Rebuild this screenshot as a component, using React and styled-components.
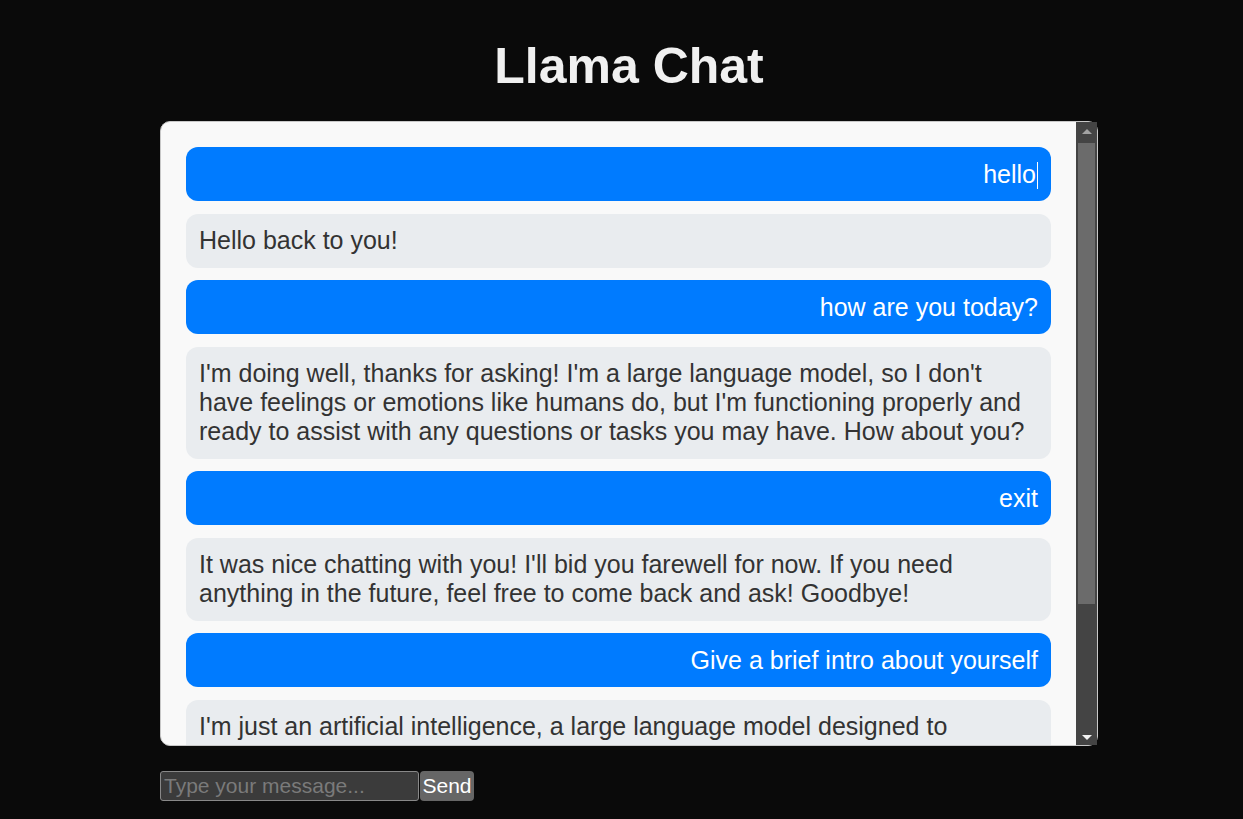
import React from 'react';
import styled, { createGlobalStyle, css } from 'styled-components';

const GlobalStyle = createGlobalStyle`
  html, body {
    margin: 0;
    padding: 0;
    background-color: #0a0a0a;
    font-family: "Liberation Sans", Arial, sans-serif;
  }
`

const Page = styled.div`
  min-height: 819px;
  padding: 37px 0 0 15px;
  box-sizing: border-box;
  display: flex;
  flex-direction: column;
  align-items: center;
`

const Title = styled.h1`
  margin: 0 0 26px;
  font-size: 50px;
  font-weight: 700;
  color: #f0f0f0;
`

const Column = styled.div`
  width: 938px;
  display: flex;
  flex-direction: column;
`

const ChatBox = styled.div`
  height: 625px;
  box-sizing: border-box;
  background-color: #f9f9f9;
  border: 1px solid #c8c8c8;
  border-radius: 10px;
  display: flex;
`

const Messages = styled.div`
  flex: 1;
  min-width: 0;
  overflow: hidden;
  border-radius: 9px 0 0 9px;
  padding: 25px;
  display: flex;
  flex-direction: column;
  gap: 12.5px;
`

const ScrollTrack = styled.div`
  width: 21px;
  flex-shrink: 0;
  background-color: #444444;
  display: flex;
  flex-direction: column;
`

const ScrollButton = styled.div`
  height: 20px;
  flex-shrink: 0;
  display: flex;
  align-items: center;
  justify-content: center;
  &:after {
    content: "";
    width: 0;
    height: 0;
    border-left: 5px solid transparent;
    border-right: 5px solid transparent;
    ${({down}) => down ? css`
      border-top: 5px solid #f2f2f2;
      margin-top: 4px;
    ` : css`
      border-bottom: 5px solid #a3a3a3;
      margin-top: -2px;
    `}
  }
`

const ScrollSpacer = styled.div`
  flex: 1;
`

const ScrollThumb = styled.div`
  height: 461px;
  margin: 1px 2px 0 2px;
  background-color: #6b6b6b;
`

const Bubble = styled.div`
  flex-shrink: 0;
  padding: 12.5px 13px;
  border-radius: 12px;
  font-size: 25px;
  line-height: 29px;
  background-color: #e9ecef;
  color: #333333;
  text-align: left;
  ${({user}) => user && css`
    background-color: #007bff;
    color: #ffffff;
    text-align: right;
  `}
`

const Caret = styled.span`
  display: inline-block;
  width: 1px;
  height: 27px;
  margin-left: 1px;
  background-color: #ffffff;
  vertical-align: -6px;
`

const InputRow = styled.div`
  margin-top: 25px;
  display: flex;
  gap: 1px;
`

const MessageInput = styled.input`
  width: 259px;
  height: 30px;
  box-sizing: border-box;
  padding: 0 3px;
  background-color: #3b3b3b;
  border: 1px solid #888888;
  border-radius: 3px;
  color: #eeeeee;
  font-family: "Liberation Sans", Arial, sans-serif;
  font-size: 21px;
  outline: none;

  &::placeholder {
    color: #7a7a7a;
  }
`

const SendButton = styled.button`
  width: 54px;
  height: 30px;
  padding: 0;
  background-color: #666666;
  border: none;
  border-radius: 4px;
  color: #ffffff;
  font-family: "Liberation Sans", Arial, sans-serif;
  font-size: 21px;
`

const messages = [
  { user: true, text: 'hello', caret: true },
  { user: false, text: 'Hello back to you!' },
  { user: true, text: 'how are you today?' },
  { user: false, text: "I'm doing well, thanks for asking! I'm a large language model, so I don't have feelings or emotions like humans do, but I'm functioning properly and ready to assist with any questions or tasks you may have. How about you?" },
  { user: true, text: 'exit' },
  { user: false, text: "It was nice chatting with you! I'll bid you farewell for now. If you need anything in the future, feel free to come back and ask! Goodbye!" },
  { user: true, text: 'Give a brief intro about yourself' },
  { user: false, text: "I'm just an artificial intelligence, a large language model designed to understand and generate human-like text. I was trained on a large body of text and can answer questions, help with writing, and chat about a wide range of topics." },
]

const App = () => {
  return (
    <Page>
      <GlobalStyle />
      <Title>Llama Chat</Title>
      <Column>
        <ChatBox>
          <Messages>
            {
              messages.map((msg, index) => (
                <Bubble key={index} user={msg.user}>
                  {msg.text}
                  {msg.caret && <Caret />}
                </Bubble>
              ))
            }
          </Messages>
          <ScrollTrack>
            <ScrollButton />
            <ScrollThumb />
            <ScrollSpacer />
            <ScrollButton down />
          </ScrollTrack>
        </ChatBox>
        <InputRow>
          <MessageInput placeholder="Type your message..." />
          <SendButton>Send</SendButton>
        </InputRow>
      </Column>
    </Page>
  )
}

export default App
